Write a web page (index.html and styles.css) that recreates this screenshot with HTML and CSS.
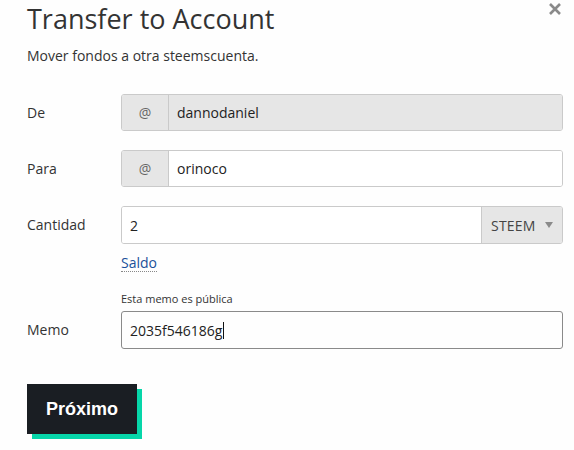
FILE: index.html
```html
<!DOCTYPE html>
<html>
<head>
<meta charset="utf-8">
<link rel="stylesheet" href="styles.css">
</head>
<body>
<div class="modal">
  <button class="close" aria-label="Cerrar">
    <svg width="14" height="14" viewBox="0 0 14 14"><path d="M2 2 L12 12 M12 2 L2 12" stroke="#8a8a8a" stroke-width="2.6" stroke-linecap="butt"/></svg>
  </button>
  <h1 class="title">Transfer to Account</h1>
  <p class="subtitle">Mover fondos a otra steemscuenta.</p>

  <div class="row row-de">
    <label class="label">De</label>
    <div class="field">
      <div class="group">
        <span class="addon">@</span>
        <span class="input disabled">dannodaniel</span>
      </div>
    </div>
  </div>

  <div class="row row-para">
    <label class="label">Para</label>
    <div class="field">
      <div class="group">
        <span class="addon">@</span>
        <span class="input">orinoco</span>
      </div>
    </div>
  </div>

  <div class="row row-cant">
    <label class="label">Cantidad</label>
    <div class="field">
      <div class="group">
        <span class="input amount">2</span>
        <span class="select">STEEM <span class="caret"></span></span>
      </div>
      <a class="saldo" href="#">Saldo</a>
    </div>
  </div>

  <div class="hint">Esta memo es pública</div>
  <div class="row row-memo">
    <label class="label">Memo</label>
    <div class="field">
      <div class="memo">2035f546186g<span class="cursor"></span></div>
    </div>
  </div>

  <div class="actions">
    <button class="btn">Próximo</button>
  </div>
</div>
</body>
</html>
```
FILE: styles.css
```css
html, body {
  margin: 0;
  padding: 0;
  background: #fefefe;
}
body {
  font-family: "Open Sans", "Liberation Sans", sans-serif;
  color: #333;
  width: 574px;
  height: 450px;
  overflow: hidden;
}
.modal {
  position: relative;
  padding: 0 11px 0 27px;
}
.close {
  position: absolute;
  right: 12px;
  top: 2px;
  background: none;
  border: 0;
  padding: 0;
  width: 14px;
  height: 14px;
}
.title {
  margin: 0;
  padding-top: 2px;
  font-weight: 400;
  font-size: 27px;
  line-height: 34px;
  color: #333;
}
.subtitle {
  margin: 10px 0 0 0;
  font-size: 14px;
  line-height: 20px;
  color: #333;
}
.row {
  display: flex;
  align-items: flex-start;
}
.label {
  width: 94px;
  flex: none;
  font-size: 14px;
  color: #333;
  line-height: 37px;
}
.field {
  flex: 1;
}
.row-de { margin-top: 28px; }
.row-para { margin-top: 19px; }
.row-cant { margin-top: 19px; }
.group {
  display: flex;
  height: 37px;
  border: 1px solid #cacaca;
  border-radius: 3px;
  box-sizing: border-box;
  overflow: hidden;
  font-size: 14px;
}
.addon {
  width: 46px;
  flex: none;
  background: #e6e6e6;
  border-right: 1px solid #cacaca;
  display: flex;
  align-items: center;
  justify-content: center;
  color: #666;
}
.input {
  flex: 1;
  display: flex;
  align-items: center;
  padding-left: 8px;
  color: #222;
  background: #fff;
}
.input.disabled {
  background: #e6e6e6;
}
.row-cant .group { height: 38px; }
.amount {
  border-right: 1px solid #cacaca;
}
.select {
  width: 80px;
  flex: none;
  background: #e6e6e6;
  display: flex;
  align-items: center;
  padding-left: 9px;
  box-sizing: border-box;
  color: #444;
  letter-spacing: 0.2px;
}
.caret {
  display: inline-block;
  width: 0;
  height: 0;
  border-left: 4px solid transparent;
  border-right: 4px solid transparent;
  border-top: 6px solid #8a8a8a;
  margin-left: 9px;
}
.saldo {
  display: inline-block;
  margin-top: 10px;
  font-size: 14px;
  color: #1a5099;
  text-decoration: none;
  border-bottom: 1px dotted #888;
  line-height: 17px;
}
.hint {
  margin: 19px 0 0 94px;
  font-size: 11px;
  line-height: 14px;
  color: #333;
}
.row-memo { margin-top: 5px; }
.memo {
  height: 38px;
  box-sizing: border-box;
  border: 1px solid #8a8a8a;
  border-radius: 3px;
  display: flex;
  align-items: center;
  padding-left: 8px;
  font-size: 14px;
  color: #222;
}
.cursor {
  display: inline-block;
  width: 1px;
  height: 17px;
  background: #111;
  margin-left: 1px;
}
.actions {
  margin-top: 35px;
}
.btn {
  width: 110px;
  height: 50px;
  border: 0;
  background: #1a1e23;
  color: #fff;
  font-family: "Liberation Sans", Arial, sans-serif;
  font-weight: 700;
  font-size: 18px;
  box-shadow: 5px 5px 0 #06d6a9;
  padding: 0;
}
```
